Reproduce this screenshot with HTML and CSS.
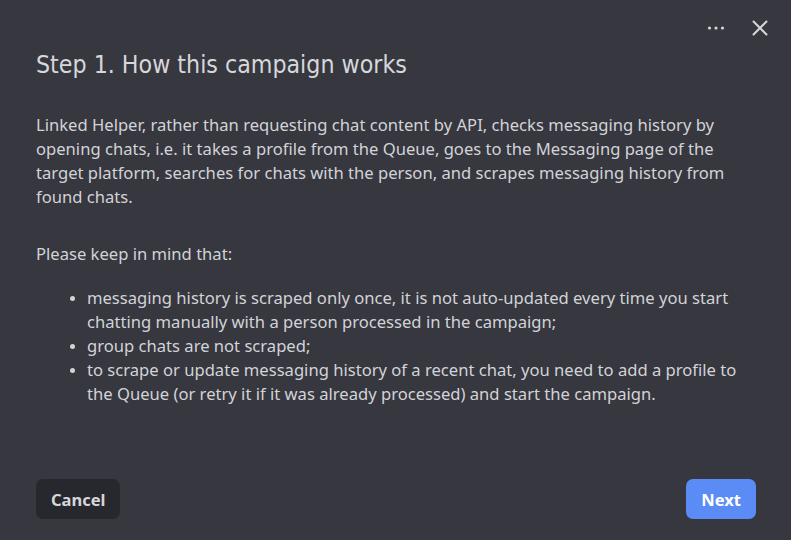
FILE: index.html
```html
<!DOCTYPE html>
<html>
<head>
	<title>How this campaign works</title>
	<link rel="stylesheet" href="styles.css">
</head>
<body>
	<div class="dialog">
		<div class="toolbar">
			<button class="icon-btn" title="More">
				<svg width="20" height="20" viewBox="0 0 20 20"><circle cx="3.5" cy="10" r="1.6" fill="#d6d7db"/><circle cx="10" cy="10" r="1.6" fill="#d6d7db"/><circle cx="16.5" cy="10" r="1.6" fill="#d6d7db"/></svg>
			</button>
			<button class="icon-btn" title="Close">
				<svg width="20" height="20" viewBox="0 0 20 20"><path d="M3.5 3.5 L16.5 16.5 M16.5 3.5 L3.5 16.5" stroke="#d6d7db" stroke-width="2" stroke-linecap="round"/></svg>
			</button>
		</div>
		<h1>Step 1. How this campaign works</h1>
		<div class="content">
			<p>Linked Helper, rather than requesting chat content by API, checks messaging history by opening chats, i.e. it takes a profile from the Queue, goes to the Messaging page of the target platform, searches for chats with the person, and scrapes messaging history from found chats.</p>
			<p>Please keep in mind that:</p>
			<ul>
				<li>messaging history is scraped only once, it is not auto-updated every time you start chatting manually with a person processed in the campaign;</li>
				<li>group chats are not scraped;</li>
				<li>to scrape or update messaging history of a recent chat, you need to add a profile to the Queue (or retry it if it was already processed) and start the campaign.</li>
			</ul>
		</div>
		<div class="footer">
			<button class="btn cancel">Cancel</button>
			<button class="btn next">Next</button>
		</div>
	</div>
</body>
</html>
```

FILE: styles.css
```css
html, body{
	margin: 0;
	padding: 0;
	background: #36373f;
}
.dialog{
	width: 791px;
	height: 540px;
	box-sizing: border-box;
	padding: 0 35px 21px 36px;
	display: flex;
	flex-direction: column;
	font-family: "Noto Sans", sans-serif;
	color: #d2d3d7;
}
.toolbar{
	display: flex;
	justify-content: flex-end;
	gap: 24px;
	padding-top: 18px;
	margin-right: -14px;
	height: 20px;
}
.icon-btn{
	background: none;
	border: 0;
	padding: 0;
	width: 20px;
	height: 20px;
	cursor: pointer;
}
h1{
	margin: 12px 0 0 0;
	font-family: "DejaVu Sans Condensed", "DejaVu Sans", sans-serif;
	font-weight: normal;
	font-size: 24.7px;
	line-height: 30px;
	color: #d6d7db;
}
.content{
	flex: 1;
	margin-top: 33px;
	font-size: 16.6px;
	line-height: 24px;
}
p{
	margin: 0 0 33px 0;
	width: 700px;
}
ul{
	margin: -13px 0 0 0;
	padding-left: 51px;
	width: 670px;
}
li::marker{
	font-size: 14px;
}
.footer{
	display: flex;
	justify-content: space-between;
}
.btn{
	border: 0;
	border-radius: 7px;
	height: 40px;
	padding: 0 15px;
	font-family: "Noto Sans", sans-serif;
	font-weight: bold;
	font-size: 16.5px;
	cursor: pointer;
}
.cancel{
	background: #27282d;
	color: #d6d7db;
}
.next{
	background: #5b8cf6;
	color: #ffffff;
}
```
